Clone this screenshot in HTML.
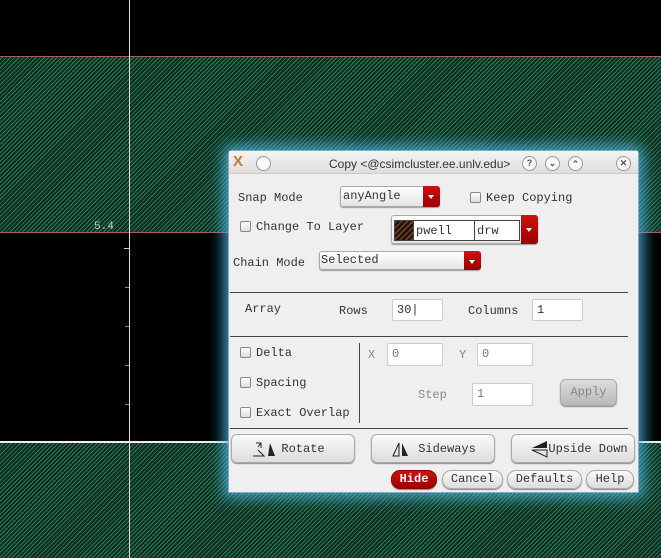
<!DOCTYPE html>
<html><head><style>
*{box-sizing:border-box;margin:0;padding:0}
body{width:661px;height:558px;background:#000;position:relative;overflow:hidden;font-family:"Liberation Mono",monospace;font-size:12px;color:#333}
.hatch{position:absolute;left:0;width:661px;background:repeating-linear-gradient(135deg,#0c2e20 0 2px,#2f7a56 2px 3px)}
.a{position:absolute}
.t{position:absolute;white-space:nowrap;line-height:14px}
.cb{position:absolute;width:11px;height:11px;border:1px solid #888;border-radius:2px;background:linear-gradient(#fff,#ddd)}
.combo{position:absolute;border:1px solid #aaa;border-radius:3px;background:linear-gradient(#fff,#e4e4e4);box-shadow:0 1px 1px #999}
.arr{position:absolute;right:-1px;top:-1px;bottom:-1px;width:17px;background:linear-gradient(#d01010,#9a0000);border-radius:0 3px 3px 0}
.arr:after{content:"";position:absolute;left:5px;top:45%;border:3px solid transparent;border-top:4px solid #fff}
.inp{position:absolute;background:#fff;border:1px solid #ccc;border-radius:2px;padding-left:4px;line-height:20px}
.sep{position:absolute;height:1px;background:#444}
.btn{position:absolute;border:1px solid #aaa;border-radius:6px;background:linear-gradient(#fafafa,#dcdcdc);box-shadow:0 1px 1px #888;text-align:center}
</style></head><body>
<div class="hatch" style="top:56px;height:177px"></div>
<div class="a" style="left:0;top:56px;width:661px;height:1px;background:#a06060"></div>
<div class="a" style="left:0;top:232px;width:661px;height:1px;background:#a06060"></div>
<div class="hatch" style="top:443px;height:115px"></div>
<div class="a" style="left:129px;top:0;width:1px;height:558px;background:#ddd"></div>
<div class="a" style="left:0;top:441px;width:661px;height:2px;background:#eee"></div>
<div class="t" style="left:94px;top:220px;color:#bcd;font-size:11px">5.4</div>
<div class="a" style="left:124px;top:248px;width:5px;height:1px;background:#ccc"></div>
<div class="a" style="left:125px;top:287px;width:4px;height:1px;background:#888"></div>
<div class="a" style="left:125px;top:326px;width:4px;height:1px;background:#888"></div>
<div class="a" style="left:125px;top:365px;width:4px;height:1px;background:#888"></div>
<div class="a" style="left:125px;top:404px;width:4px;height:1px;background:#888"></div>

<div class="a" style="left:228px;top:150px;width:411px;height:343px;background:#efefef;border:1px solid #8ab;box-shadow:0 0 14px 5px rgba(80,190,240,.75);border-radius:4px 4px 0 0">
</div>
<div class="a" style="left:229px;top:151px;width:409px;height:23px;background:linear-gradient(#f4f4f4,#dedede);border-bottom:1px solid #ccc"></div>
<div class="t" style="left:233px;top:155px;font-family:'Liberation Sans';font-size:15px;font-weight:bold;color:#c73">X</div>
<div class="a" style="left:256px;top:156px;width:15px;height:15px;border:1px solid #999;border-radius:50%;background:#f8f8f8"></div>
<div class="t" style="left:329px;top:157px;font-family:'Liberation Sans',sans-serif;font-size:12px;color:#333">Copy &lt;@csimcluster.ee.unlv.edu&gt;</div>
<div class="a" style="left:522px;top:156px;width:15px;height:15px;border:1px solid #999;border-radius:50%;background:#f8f8f8;font:bold 9px 'Liberation Sans';text-align:center;line-height:13px;color:#555">?</div>
<div class="a" style="left:545px;top:156px;width:15px;height:15px;border:1px solid #999;border-radius:50%;background:#f8f8f8;font:bold 9px 'Liberation Sans';text-align:center;line-height:13px;color:#555">⌄</div>
<div class="a" style="left:568px;top:156px;width:15px;height:15px;border:1px solid #999;border-radius:50%;background:#f8f8f8;font:bold 9px 'Liberation Sans';text-align:center;line-height:15px;color:#555">⌃</div>
<div class="a" style="left:616px;top:156px;width:15px;height:15px;border:1px solid #999;border-radius:50%;background:#f8f8f8;font:bold 9px 'Liberation Sans';text-align:center;line-height:13px;color:#555">✕</div>

<div class="t" style="left:238px;top:191px">Snap Mode</div>
<div class="combo" style="left:340px;top:186px;width:100px;height:21px"><span class="t" style="left:2px;top:2px">anyAngle</span><div class="arr"></div></div>
<div class="cb" style="left:470px;top:192px"></div>
<div class="t" style="left:486px;top:191px">Keep Copying</div>
<div class="cb" style="left:240px;top:221px"></div>
<div class="t" style="left:256px;top:220px">Change To Layer</div>
<div class="combo" style="left:391px;top:215px;width:147px;height:29px"><div class="arr"></div>
<div class="a" style="left:2px;top:4px;width:126px;height:21px;border:1px solid #444;background:#fff">
<div class="a" style="left:0;top:0;width:19px;height:19px;background:repeating-linear-gradient(135deg,#6b3a1a 0 2px,#111 2px 4px);border-right:1px solid #444"></div>
<span class="t" style="left:21px;top:3px">pwell</span>
<div class="a" style="left:79px;top:0;width:1px;height:19px;background:#444"></div>
<span class="t" style="left:82px;top:3px">drw</span></div></div>
<div class="t" style="left:233px;top:256px">Chain Mode</div>
<div class="combo" style="left:319px;top:251px;width:162px;height:19px"><span class="t" style="left:1px;top:1px">Selected</span><div class="arr"></div></div>

<div class="sep" style="left:230px;top:292px;width:398px"></div>
<div class="t" style="left:245px;top:302px">Array</div>
<div class="t" style="left:339px;top:304px">Rows</div>
<div class="inp" style="left:392px;top:299px;width:51px;height:22px">30|</div>
<div class="t" style="left:468px;top:304px">Columns</div>
<div class="inp" style="left:532px;top:299px;width:51px;height:22px">1</div>
<div class="sep" style="left:230px;top:336px;width:398px"></div>

<div class="cb" style="left:240px;top:347px"></div><div class="t" style="left:256px;top:346px">Delta</div>
<div class="cb" style="left:240px;top:377px"></div><div class="t" style="left:256px;top:376px">Spacing</div>
<div class="cb" style="left:240px;top:407px"></div><div class="t" style="left:256px;top:406px">Exact Overlap</div>
<div class="a" style="left:359px;top:343px;width:1px;height:80px;background:#444"></div>
<div class="t" style="left:368px;top:348px;color:#888">X</div>
<div class="inp" style="left:387px;top:343px;width:56px;height:23px;color:#777">0</div>
<div class="t" style="left:459px;top:348px;color:#888">Y</div>
<div class="inp" style="left:477px;top:343px;width:56px;height:23px;color:#777">0</div>
<div class="t" style="left:418px;top:388px;color:#888">Step</div>
<div class="inp" style="left:472px;top:383px;width:61px;height:23px;color:#777">1</div>
<div class="btn" style="left:560px;top:379px;width:57px;height:27px;background:linear-gradient(#ddd,#b8b8b8);color:#888;line-height:25px">Apply</div>
<div class="sep" style="left:230px;top:428px;width:398px"></div>

<div class="btn" style="left:231px;top:434px;width:124px;height:29px;line-height:29px">
<svg class="a" style="left:20px;top:7px" width="24" height="15"><path d="M1 14H12L6 8M9 6V1H4M9 1L6 5" stroke="#222" fill="none"/><path d="M16 14H23L18 1Z" fill="#222"/></svg><span style="margin-left:20px">Rotate</span></div>
<div class="btn" style="left:371px;top:434px;width:124px;height:29px;line-height:29px">
<svg class="a" style="left:20px;top:7px" width="18" height="15"><path d="M7 1L1 14H7Z" stroke="#222" fill="none"/><path d="M10 1L16 14H10Z" fill="#222"/></svg><span style="margin-left:28px">Sideways</span></div>
<div class="btn" style="left:511px;top:434px;width:124px;height:29px;line-height:29px">
<svg class="a" style="left:19px;top:5px" width="18" height="18"><path d="M1 8L16 1V8Z" fill="#222"/><path d="M1 10L16 17V10Z" stroke="#222" fill="none"/></svg><span style="margin-left:30px">Upside Down</span></div>

<div class="btn" style="left:391px;top:470px;width:46px;height:19px;background:linear-gradient(#d01010,#980000);border-color:#800;color:#fff;font-weight:bold;line-height:17px;border-radius:9px">Hide</div>
<div class="btn" style="left:442px;top:470px;width:61px;height:19px;line-height:17px;border-radius:9px">Cancel</div>
<div class="btn" style="left:507px;top:470px;width:75px;height:19px;line-height:17px;border-radius:9px">Defaults</div>
<div class="btn" style="left:586px;top:470px;width:48px;height:19px;line-height:17px;border-radius:9px">Help</div>
</body></html>
